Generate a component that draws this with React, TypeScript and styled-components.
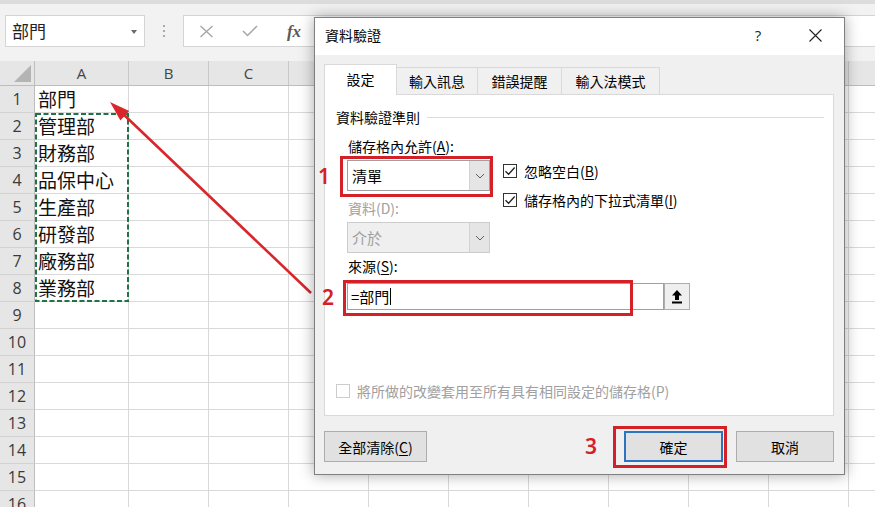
import React from "react";
import styled, { createGlobalStyle } from "styled-components";

const UI = `"Noto Sans CJK TC", "Noto Sans", sans-serif`;
const LATIN = `"Open Sans", "Noto Sans", sans-serif`;
const RED = "#d42027";

const GlobalStyle = createGlobalStyle`
  html, body { margin: 0; padding: 0; background: #fff; overflow: hidden; }
  * { box-sizing: border-box; }
`;

const Page = styled.div`
  position: relative;
  width: 875px;
  height: 507px;
  overflow: hidden;
  background: #fff;
  font-family: ${UI};
`;

/* ---------- formula bar ---------- */
const FormulaArea = styled.div`
  height: 61px;
  background: #f2f2f2;
  border-top: 4px solid #dcdcdc;
  display: flex;
  align-items: flex-start;
  padding: 11px 0 0 5px;
`;

const NameBox = styled.div`
  width: 140px;
  height: 32px;
  background: #fff;
  border: 1px solid #d4d4d4;
  display: flex;
  align-items: center;
  justify-content: space-between;
  padding: 0 7px 0 6px;
  font-size: 17px;
  line-height: 20px;
  color: #222;
`;

const NameArrow = styled.span`
  width: 0;
  height: 0;
  border-left: 3.5px solid transparent;
  border-right: 3.5px solid transparent;
  border-top: 4px solid #6b6b6b;
  margin-top: 2px;
`;

const Grip = styled.div`
  width: 38px;
  height: 32px;
  display: flex;
  align-items: center;
  justify-content: center;
`;

const FormulaBox = styled.div`
  flex: 1;
  height: 32px;
  background: #fff;
  border: 1px solid #d4d4d4;
  border-right: none;
  display: flex;
  align-items: center;
`;

const FxSlot = styled.div`
  width: 44px;
  height: 30px;
  display: flex;
  align-items: center;
  justify-content: center;
`;

const FxText = styled.span`
  font-family: "Liberation Serif", serif;
  font-style: italic;
  font-weight: bold;
  font-size: 17px;
  color: #5a5a5a;
  line-height: 1;
`;

/* ---------- sheet ---------- */
const Sheet = styled.div`
  position: relative;
  display: grid;
  grid-template-columns: 35px 94px repeat(10, 80px);
  grid-template-rows: 25px repeat(16, 27px);
`;

const Placed = styled.div<{ $r: number; $c: number }>`
  grid-row: ${(p) => p.$r};
  grid-column: ${(p) => p.$c};
`;

const Corner = styled(Placed)`
  position: relative;
  background: #e6e6e6;
  border-right: 1px solid #bdbdbd;
  border-bottom: 1px solid #bdbdbd;
  &::after {
    content: "";
    position: absolute;
    right: 3px;
    bottom: 3px;
    width: 0;
    height: 0;
    border-left: 17px solid transparent;
    border-bottom: 17px solid #b4b4b4;
  }
`;

const ColHead = styled(Placed)`
  background: #e6e6e6;
  border-right: 1px solid #c8c8c8;
  border-bottom: 1px solid #bdbdbd;
  font-family: ${LATIN};
  font-size: 15px;
  line-height: 24px;
  text-align: center;
  color: #444;
  overflow: hidden;
`;

const RowHead = styled(Placed)`
  background: #e6e6e6;
  border-right: 1px solid #bdbdbd;
  border-bottom: 1px solid #d2d2d2;
  font-family: ${LATIN};
  font-size: 16px;
  line-height: 27px;
  text-align: center;
  color: #3a3a3a;
  overflow: hidden;
`;

const Cell = styled(Placed)`
  border-right: 1px solid #d9d9d9;
  border-bottom: 1px solid #d9d9d9;
  font-size: 19px;
  line-height: 26px;
  padding-left: 3px;
  color: #111;
  white-space: nowrap;
  overflow: hidden;
`;

const CopyMarquee = styled.div`
  grid-row: 3 / 10;
  grid-column: 2;
  pointer-events: none;
  svg {
    display: block;
    width: 100%;
    height: 100%;
  }
`;

const Overlay = styled.svg`
  position: absolute;
  left: 0;
  top: 0;
  width: 875px;
  height: 507px;
  pointer-events: none;
`;

/* ---------- dialog ---------- */
const Dialog = styled.div`
  position: absolute;
  left: 314px;
  top: 17px;
  width: 531px;
  height: 458px;
  background: #f0f0f0;
  border: 1px solid #7f7f7f;
  box-shadow: 0 0 14px rgba(0, 0, 0, 0.35);
  display: flex;
  flex-direction: column;
  color: #000;
`;

const TitleBar = styled.div`
  height: 37px;
  background: #fff;
  display: flex;
  align-items: center;
  padding-left: 10px;
  padding-bottom: 3px;
  font-size: 14px;
  line-height: 18px;
`;

const TitleButtons = styled.div`
  margin-left: auto;
  display: flex;
  height: 100%;
`;

const TitleBtn = styled.div<{ $w: number; $mr?: number }>`
  width: ${(p) => p.$w}px;
  margin-right: ${(p) => p.$mr ?? 0}px;
  display: flex;
  align-items: center;
  justify-content: center;
  font-family: ${LATIN};
  font-size: 15px;
  color: #222;
`;

const Body = styled.div`
  flex: 1;
  display: flex;
  flex-direction: column;
  padding: 10px 10px 0 9px;
`;

const TabRow = styled.div`
  height: 30px;
  display: flex;
  align-items: flex-end;
  position: relative;
  z-index: 1;
  margin-bottom: -1px;
`;

const Tab = styled.div<{ $active?: boolean; $w: number }>`
  width: ${(p) => p.$w}px;
  height: ${(p) => (p.$active ? 31 : 28)}px;
  background: ${(p) => (p.$active ? "#fff" : "#f0f0f0")};
  border: 1px solid #d9d9d9;
  border-bottom: ${(p) => (p.$active ? "none" : "1px solid #d9d9d9")};
  border-left: ${(p) => (p.$active ? "1px solid #d9d9d9" : "none")};
  display: flex;
  align-items: center;
  justify-content: center;
  font-size: 14px;
  line-height: 18px;
  padding-bottom: ${(p) => (p.$active ? 3 : 1)}px;
`;

const Panel = styled.div`
  height: 322px;
  background: #fff;
  border: 1px solid #d9d9d9;
  display: flex;
  flex-direction: column;
  padding: 14px 9px 0 11px;
`;

const GroupHeader = styled.div`
  height: 16px;
  display: flex;
  align-items: center;
  font-size: 14px;
  line-height: 16px;
  &::after {
    content: "";
    flex: 1;
    height: 1px;
    margin-left: 7px;
    background: #dcdcdc;
  }
`;

const Criteria = styled.div`
  display: flex;
  padding-left: 11px;
`;

const LeftCol = styled.div`
  width: 143px;
  display: flex;
  flex-direction: column;
`;

const RightCol = styled.div`
  margin-left: 13px;
  padding-top: 39px;
  display: flex;
  flex-direction: column;
  gap: 15px;
`;

const Label = styled.div<{ $mt: number; $disabled?: boolean }>`
  margin-top: ${(p) => p.$mt}px;
  height: 18px;
  font-size: 14px;
  line-height: 18px;
  padding-left: 1px;
  white-space: nowrap;
  color: ${(p) => (p.$disabled ? "#a0a0a0" : "#000")};
  u {
    text-decoration: underline;
    text-underline-offset: 2px;
  }
`;

const Annotated = styled.div<{ $mt: number }>`
  position: relative;
  margin-top: ${(p) => p.$mt}px;
`;

const Mark = styled.div<{ $l: number; $t: number; $w: number; $h: number }>`
  position: absolute;
  left: ${(p) => p.$l}px;
  top: ${(p) => p.$t}px;
  width: ${(p) => p.$w}px;
  height: ${(p) => p.$h}px;
  border: 3px solid ${RED};
  pointer-events: none;
`;

const MarkNum = styled.div<{ $l: number; $t: number }>`
  position: absolute;
  left: ${(p) => p.$l}px;
  top: ${(p) => p.$t}px;
  font-family: "Noto Sans", sans-serif;
  font-weight: 600;
  font-size: 21px;
  line-height: 20px;
  color: ${RED};
`;

const Select = styled.div<{ $disabled?: boolean }>`
  height: 31px;
  width: 143px;
  display: flex;
  border: 1px solid ${(p) => (p.$disabled ? "#cccccc" : "#a0a0a0")};
  background: ${(p) => (p.$disabled ? "#efefef" : "#fff")};
`;

const SelectValue = styled.div<{ $disabled?: boolean }>`
  flex: 1;
  font-size: 15px;
  line-height: 29px;
  padding-left: 4px;
  color: ${(p) => (p.$disabled ? "#a0a0a0" : "#000")};
`;

const SelectBtn = styled.div`
  width: 20px;
  background: #e5e5e5;
  border-left: 1px solid #d2d2d2;
  display: flex;
  align-items: center;
  justify-content: center;
`;

const CheckRow = styled.div<{ $disabled?: boolean }>`
  display: flex;
  align-items: center;
  gap: 7px;
  height: 14px;
  font-size: 14px;
  line-height: 18px;
  white-space: nowrap;
  color: ${(p) => (p.$disabled ? "#a0a0a0" : "#000")};
  u {
    text-decoration: underline;
    text-underline-offset: 2px;
  }
`;

const Box = styled.div<{ $disabled?: boolean }>`
  width: 14px;
  height: 14px;
  flex: none;
  border: 1px solid ${(p) => (p.$disabled ? "#cccccc" : "#333")};
  background: #fff;
  display: flex;
  align-items: center;
  justify-content: center;
`;

const SourceRow = styled.div`
  display: flex;
  padding-left: 11px;
  margin-top: 8px;
`;

const Input = styled.div`
  width: 317px;
  height: 27px;
  border: 1px solid #a0a0a0;
  background: #fff;
  display: flex;
  align-items: center;
  padding-left: 3px;
  font-size: 15px;
  line-height: 20px;
`;

const Caret = styled.span`
  display: inline-block;
  width: 1px;
  height: 17px;
  background: #000;
  margin-left: 1px;
`;

const RefBtn = styled.div`
  width: 26px;
  height: 27px;
  border: 1px solid #adadad;
  background: #efefef;
  display: flex;
  align-items: center;
  justify-content: center;
`;

const ApplyAll = styled(CheckRow)`
  margin-top: 74px;
`;

const Footer = styled.div`
  display: flex;
  padding-top: 15px;
`;

const Button = styled.div<{ $w: number; $default?: boolean }>`
  width: ${(p) => p.$w}px;
  height: 31px;
  background: #e1e1e1;
  border: ${(p) => (p.$default ? "2px solid #2d74c0" : "1px solid #adadad")};
  display: flex;
  align-items: center;
  justify-content: center;
  font-size: 14px;
  line-height: 18px;
  u {
    text-decoration: underline;
    text-underline-offset: 2px;
  }
`;

const ButtonGroup = styled.div`
  margin-left: auto;
  display: flex;
  gap: 13px;
`;

const Chevron = () => (
  <svg width="10" height="6" viewBox="0 0 10 6">
    <polyline points="1,1 5,5 9,1" fill="none" stroke="#606060" strokeWidth="1" />
  </svg>
);

const Tick = () => (
  <svg width="12" height="12" viewBox="0 0 12 12">
    <polyline points="1.5,6.2 4.6,9.3 10.7,2.5" fill="none" stroke="#222" strokeWidth="1.3" />
  </svg>
);

const data = ["部門", "管理部", "財務部", "品保中心", "生產部", "研發部", "廠務部", "業務部"];
const cols = ["A", "B", "C", "D", "E", "F", "G", "H", "I", "J", "K"];

export default function App() {
  const rows = Array.from({ length: 16 }, (_, i) => i + 1);
  return (
    <Page>
      <GlobalStyle />
      <FormulaArea>
        <NameBox>
          <span>部門</span>
          <NameArrow />
        </NameBox>
        <Grip>
          <svg width="4" height="14" viewBox="0 0 4 14">
            <circle cx="2" cy="2" r="1.1" fill="#9a9a9a" />
            <circle cx="2" cy="7" r="1.1" fill="#9a9a9a" />
            <circle cx="2" cy="12" r="1.1" fill="#9a9a9a" />
          </svg>
        </Grip>
        <FormulaBox>
          <FxSlot>
            <svg width="15" height="13" viewBox="0 0 15 13">
              <path d="M1.5 1 L13.5 12 M13.5 1 L1.5 12" stroke="#a6a6a6" strokeWidth="1.4" fill="none" />
            </svg>
          </FxSlot>
          <FxSlot>
            <svg width="16" height="12" viewBox="0 0 16 12">
              <polyline points="1,6 5.5,10.5 15,1" stroke="#a6a6a6" strokeWidth="1.5" fill="none" />
            </svg>
          </FxSlot>
          <FxSlot>
            <FxText>fx</FxText>
          </FxSlot>
        </FormulaBox>
      </FormulaArea>

      <Sheet>
        <Corner $r={1} $c={1} />
        {cols.map((c, i) => (
          <ColHead key={c} $r={1} $c={i + 2}>
            {c}
          </ColHead>
        ))}
        {rows.map((r) => (
          <React.Fragment key={r}>
            <RowHead $r={r + 1} $c={1}>
              {r}
            </RowHead>
            {cols.map((c, i) => (
              <Cell key={c} $r={r + 1} $c={i + 2}>
                {i === 0 && r <= data.length ? data[r - 1] : ""}
              </Cell>
            ))}
          </React.Fragment>
        ))}
        <CopyMarquee>
          <svg viewBox="0 0 94 189" preserveAspectRatio="none">
            <rect x="1" y="1" width="92" height="187" fill="none" stroke="#217346" strokeWidth="2" strokeDasharray="5 2.5" />
          </svg>
        </CopyMarquee>
      </Sheet>

      <Overlay viewBox="0 0 875 507">
        <line x1="311" y1="293" x2="121" y2="112" stroke="#d9262a" strokeWidth="2.6" />
        <polygon points="110,102 129.2,111 120.4,120.6" fill="#d9262a" />
      </Overlay>

      <Dialog>
        <TitleBar>
          資料驗證
          <TitleButtons>
            <TitleBtn $w={68}>?</TitleBtn>
            <TitleBtn $w={46} $mr={6}>
              <svg width="13" height="13" viewBox="0 0 13 13">
                <path d="M0.5 0.5 L12.5 12.5 M12.5 0.5 L0.5 12.5" stroke="#222" strokeWidth="1.1" fill="none" />
              </svg>
            </TitleBtn>
          </TitleButtons>
        </TitleBar>
        <Body>
          <TabRow>
            <Tab $active $w={73}>設定</Tab>
            <Tab $w={81}>輸入訊息</Tab>
            <Tab $w={84}>錯誤提醒</Tab>
            <Tab $w={98}>輸入法模式</Tab>
          </TabRow>
          <Panel>
            <GroupHeader>資料驗證準則</GroupHeader>
            <Criteria>
              <LeftCol>
                <Label $mt={12}>
                  儲存格內允許(<u>A</u>):
                </Label>
                <Annotated $mt={5}>
                  <Select>
                    <SelectValue>清單</SelectValue>
                    <SelectBtn>
                      <Chevron />
                    </SelectBtn>
                  </Select>
                  <Mark $l={-7} $t={-4} $w={153} $h={41} />
                  <MarkNum $l={-29} $t={6}>1</MarkNum>
                </Annotated>
                <Label $mt={8} $disabled>
                  資料(D):
                </Label>
                <Annotated $mt={5}>
                  <Select $disabled>
                    <SelectValue $disabled>介於</SelectValue>
                    <SelectBtn>
                      <Chevron />
                    </SelectBtn>
                  </Select>
                </Annotated>
                <Label $mt={4}>
                  來源(<u>S</u>):
                </Label>
              </LeftCol>
              <RightCol>
                <CheckRow>
                  <Box>
                    <Tick />
                  </Box>
                  <span>
                    忽略空白(<u>B</u>)
                  </span>
                </CheckRow>
                <CheckRow>
                  <Box>
                    <Tick />
                  </Box>
                  <span>
                    儲存格內的下拉式清單(<u>I</u>)
                  </span>
                </CheckRow>
              </RightCol>
            </Criteria>
            <SourceRow>
              <Annotated $mt={0}>
                <Input>
                  =部門
                  <Caret />
                </Input>
                <Mark $l={-4} $t={-3} $w={290} $h={36} />
                <MarkNum $l={-25} $t={4}>2</MarkNum>
              </Annotated>
              <RefBtn>
                <svg width="12" height="15" viewBox="0 0 12 15">
                  <polygon points="6,1 11,6.5 8,6.5 8,11 4,11 4,6.5 1,6.5" fill="#000" />
                  <rect x="1" y="12.5" width="10" height="2" fill="#000" />
                </svg>
              </RefBtn>
            </SourceRow>
            <ApplyAll $disabled>
              <Box $disabled />
              <span>將所做的改變套用至所有具有相同設定的儲存格(P)</span>
            </ApplyAll>
          </Panel>
          <Footer>
            <Button $w={103}>
              全部清除(<u>C</u>)
            </Button>
            <ButtonGroup>
              <Annotated $mt={0}>
                <Button $w={99} $default>
                  確定
                </Button>
                <Mark $l={-11} $t={-5} $w={114} $h={42} />
                <MarkNum $l={-39} $t={5}>3</MarkNum>
              </Annotated>
              <Button $w={98}>取消</Button>
            </ButtonGroup>
          </Footer>
        </Body>
      </Dialog>
    </Page>
  );
}
